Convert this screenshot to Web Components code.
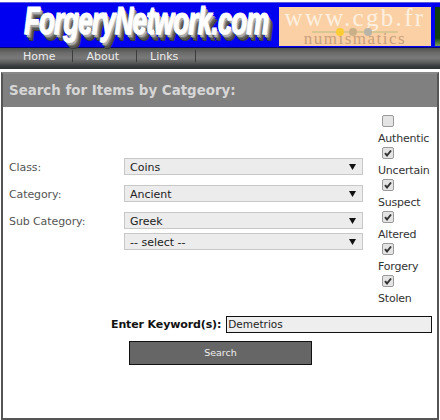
<!DOCTYPE html>
<html>
<head>
<meta charset="utf-8">
<title>ForgeryNetwork</title>
<style>
    html, body { margin: 0; padding: 0; background: #fff; }
    body { font-family: "DejaVu Sans", Verdana, sans-serif; font-size: 11px; width: 440px; height: 420px; overflow: hidden; }
</style>
</head>
<body>
<site-banner></site-banner>
<nav-bar>
    <nav-link>Home</nav-link>
    <nav-link>About</nav-link>
    <nav-link>Links</nav-link>
</nav-bar>
<search-panel heading="Search for Items by Catgeory:">
    <form-row slot="rows" label="Class:"><drop-select>Coins</drop-select></form-row>
    <form-row slot="rows" label="Category:"><drop-select>Ancient</drop-select></form-row>
    <form-row slot="rows" label="Sub Category:"><drop-select>Greek</drop-select></form-row>
    <form-row slot="rows" label="" tight><drop-select>-- select --</drop-select></form-row>
    <check-item slot="checks">Authentic</check-item>
    <check-item slot="checks" checked>Uncertain</check-item>
    <check-item slot="checks" checked>Suspect</check-item>
    <check-item slot="checks" checked>Altered</check-item>
    <check-item slot="checks" checked>Forgery</check-item>
    <check-item slot="checks" checked>Stolen</check-item>
</search-panel>

<script>
const bannerTemplate = document.createElement("template")
bannerTemplate.innerHTML = `
<style>
    :host {
        display: flex;
        height: 46px;
        margin-top: 2px;
        background: #0000f0;
        border-top: 1px solid #5a5ae0;
        border-bottom: 1px solid #00007a;
        box-sizing: border-box;
    }
    .logo {
        width: 279px;
        flex: none;
        box-sizing: border-box;
        padding-left: 24px;
    }
    .logo span {
        display: inline-block;
        font: italic bold 25.5px/32px "Liberation Sans", sans-serif;
        letter-spacing: -0.6px;
        color: #fff;
        white-space: nowrap;
        -webkit-text-stroke: 0.8px #fff;
        text-shadow: 1px 1px 0 #e4e4e4, 2px 2px 0 #aaa, 3px 3px 0 #777, 4px 4px 0 #555, 5px 5px 0 #3a3a3a;
        transform: scaleY(1.5);
        transform-origin: 0 14px;
    }
    .ad {
        width: 152px;
        height: 39px;
        margin-top: 4px;
        flex: none;
        background: #fbd0a4;
        display: flex;
        flex-direction: column;
        align-items: center;
        position: relative;
    }
    .www {
        font: 25px/22px "Liberation Serif", serif;
        letter-spacing: 2.3px;
        color: #fdf0e0;
    }
    .num {
        font: 17px/14px "Liberation Serif", serif;
        letter-spacing: 1.5px;
        color: #c9a07c;
        margin-top: 3px;
    }
    .rule {
        position: absolute;
        left: 33px;
        top: 20px;
    }
    .ad2 {
        width: 5px;
        height: 39px;
        margin: 4px 0 0 4px;
        flex: none;
        background: linear-gradient(#123f10 80%, #7a9a60);
    }
</style>
<div class="logo"><span>ForgeryNetwork.com</span></div>
<div class="ad">
    <span class="www">www.cgb.fr</span>
    <span class="num">numismatics</span>
    <svg class="rule" width="86" height="10" viewBox="0 0 86 10">
        <line x1="0" y1="5" x2="86" y2="5" stroke="#b9bc80"/>
        <circle cx="28" cy="5" r="4" fill="#fbcd35"/>
        <circle cx="41" cy="5" r="4" fill="#c9b088"/>
        <circle cx="56" cy="5" r="4" fill="#b8b4a8"/>
    </svg>
</div>
<div class="ad2"></div>`

class SiteBanner extends HTMLElement {
    constructor() {
        super()
        this.attachShadow({mode: "open"}).append(bannerTemplate.content.cloneNode(true))
    }
}
customElements.define("site-banner", SiteBanner)

const navBarTemplate = document.createElement("template")
navBarTemplate.innerHTML = `
<style>
    :host {
        display: flex;
        height: 21px;
        padding-left: 10px;
        box-sizing: border-box;
        background: linear-gradient(#4c524c 0, #6c6c6c 5px, #7a7a7a 10px, #606060 14px, #383c3c 18px, #2c3030 21px);
    }
</style>
<slot></slot>`

class NavBar extends HTMLElement {
    constructor() {
        super()
        this.attachShadow({mode: "open"}).append(navBarTemplate.content.cloneNode(true))
    }
}
customElements.define("nav-bar", NavBar)

const navLinkTemplate = document.createElement("template")
navLinkTemplate.innerHTML = `
<style>
    :host {
        display: flex;
        align-items: center;
        height: 12px;
        margin-top: 2px;
        padding: 0 17px 0 13px;
        color: #ececec;
        font-size: 11px;
        border-right: 1px solid #3c3c3c;
    }
</style>
<slot></slot>`

class NavLink extends HTMLElement {
    constructor() {
        super()
        this.attachShadow({mode: "open"}).append(navLinkTemplate.content.cloneNode(true))
    }
}
customElements.define("nav-link", NavLink)

const panelTemplate = document.createElement("template")
panelTemplate.innerHTML = `
<style>
    :host {
        display: block;
        height: 348px;
        margin: 3px 1px 0 1px;
        box-sizing: border-box;
        border: 2px solid #555;
        border-top-color: #888;
        background: #fff;
    }
    h2 {
        margin: 0;
        height: 33px;
        padding-left: 6px;
        background: #808080;
        color: #d6d6d6;
        font: bold 13.4px/33px "DejaVu Sans", sans-serif;
    }
    .form {
        display: flex;
    }
    .rows {
        width: 375px;
        flex: none;
        padding-top: 51px;
        box-sizing: border-box;
    }
    .checks {
        display: flex;
        flex-direction: column;
        padding-top: 8px;
    }
    .keyword {
        display: flex;
        align-items: center;
        margin-top: 9px;
        padding-left: 108px;
        font-weight: bold;
        color: #111;
        gap: 5px;
    }
    .keyword span {
        letter-spacing: -0.12px;
    }
    .field {
        width: 206px;
        height: 17px;
        box-sizing: border-box;
        border: 1px solid #111;
        background: #eee;
        font-weight: normal;
        font-size: 10.5px;
        line-height: 15px;
        padding-left: 1px;
        color: #222;
    }
    .go {
        width: 183px;
        height: 24px;
        box-sizing: border-box;
        margin: 8px 0 0 126px;
        border: 1px solid #111;
        background: #666;
        color: #eee;
        font-size: 9.5px;
        line-height: 22px;
        text-align: center;
    }
</style>
<h2></h2>
<div class="form">
    <div class="rows"><slot name="rows"></slot></div>
    <div class="checks"><slot name="checks"></slot></div>
</div>
<div class="keyword"><span>Enter Keyword(s):</span><div class="field">Demetrios</div></div>
<div class="go">Search</div>`

class SearchPanel extends HTMLElement {
    constructor() {
        super()
        this.attachShadow({mode: "open"}).append(panelTemplate.content.cloneNode(true))
    }

    connectedCallback() {
        this.shadowRoot.querySelector("h2").textContent = this.getAttribute("heading")
    }
}
customElements.define("search-panel", SearchPanel)

const rowTemplate = document.createElement("template")
rowTemplate.innerHTML = `
<style>
    :host {
        display: grid;
        grid-template-columns: 115px 239px;
        padding-left: 6px;
        margin-bottom: 10px;
        color: #555;
    }
    :host([tight]) {
        margin-top: -6px;
    }
    .label {
        height: 17px;
        line-height: 19px;
        letter-spacing: -0.1px;
    }
</style>
<div class="label"></div>
<slot></slot>`

class FormRow extends HTMLElement {
    constructor() {
        super()
        this.attachShadow({mode: "open"}).append(rowTemplate.content.cloneNode(true))
    }

    connectedCallback() {
        this.shadowRoot.querySelector(".label").textContent = this.getAttribute("label")
    }
}
customElements.define("form-row", FormRow)

const selectTemplate = document.createElement("template")
selectTemplate.innerHTML = `
<style>
    :host {
        display: flex;
        justify-content: space-between;
        align-items: center;
        height: 17px;
        box-sizing: border-box;
        padding: 0 6px 0 5px;
        background: #ececec;
        border: 1px solid #c8c8c8;
        color: #222;
        font-size: 11px;
    }
    span {
        padding-top: 1px;
    }
    svg {
        flex: none;
    }
</style>
<span><slot></slot></span>
<svg width="7" height="6" viewBox="0 0 7 6"><path d="M0 0H7L3.5 6Z" fill="#111"/></svg>`

class DropSelect extends HTMLElement {
    constructor() {
        super()
        this.attachShadow({mode: "open"}).append(selectTemplate.content.cloneNode(true))
    }
}
customElements.define("drop-select", DropSelect)

const checkTemplate = document.createElement("template")
checkTemplate.innerHTML = `
<style>
    :host {
        display: flex;
        flex-direction: column;
        height: 32px;
        color: #333;
        font-size: 11px;
    }
    .box {
        width: 12px;
        height: 12px;
        box-sizing: border-box;
        margin-left: 4px;
        border: 1px solid #9a9a9a;
        border-radius: 2px;
        background: #e4e4e4;
        display: flex;
    }
    svg {
        display: none;
    }
    :host([checked]) svg {
        display: block;
    }
    .text {
        padding-top: 4px;
        line-height: 16px;
        letter-spacing: -0.2px;
    }
</style>
<div class="box"><svg width="10" height="10" viewBox="0 0 10 10"><path d="M2 5.2L4 7.5L8 2.5" fill="none" stroke="#333" stroke-width="2"/></svg></div>
<div class="text"><slot></slot></div>`

class CheckItem extends HTMLElement {
    constructor() {
        super()
        this.attachShadow({mode: "open"}).append(checkTemplate.content.cloneNode(true))
    }
}
customElements.define("check-item", CheckItem)
</script>
</body>
</html>
